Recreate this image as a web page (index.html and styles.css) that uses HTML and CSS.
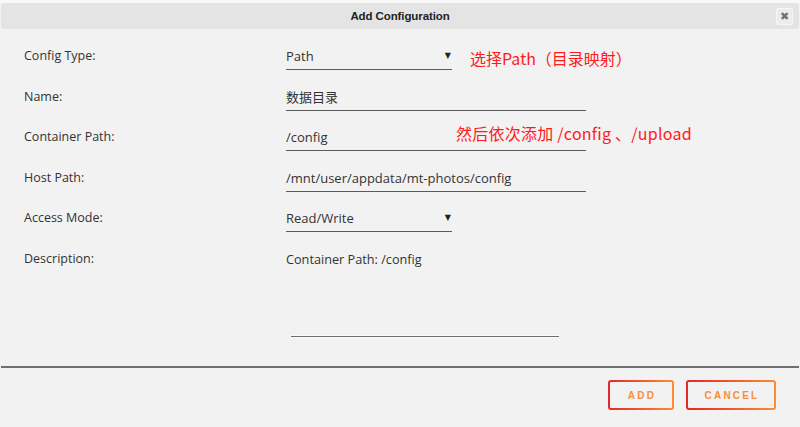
FILE: index.html
```html
<!DOCTYPE html>
<html>
<head>
<meta charset="utf-8">
<link rel="stylesheet" href="styles.css">
</head>
<body>
<div class="dialog">
  <div class="titlebar">
    <span class="title-spacer"></span>
    <span class="title">Add Configuration</span>
    <span class="close-wrap"><span class="close">&#x2716;</span></span>
  </div>
  <div class="form">
    <div class="label">Config Type:</div>
    <div class="field">
      <div class="select short"><span>Path</span><span class="arrow">&#9660;</span></div>
      <span class="note note-1">选择Path（目录映射）</span>
    </div>

    <div class="label">Name:</div>
    <div class="field"><div class="input long">数据目录</div></div>

    <div class="label">Container Path:</div>
    <div class="field">
      <div class="input long">/config</div>
      <span class="note note-2">然后依次添加 /config 、/upload</span>
    </div>

    <div class="label">Host Path:</div>
    <div class="field"><div class="input long">/mnt/user/appdata/mt-photos/config</div></div>

    <div class="label">Access Mode:</div>
    <div class="field">
      <div class="select short"><span>Read/Write</span><span class="arrow">&#9660;</span></div>
    </div>

    <div class="label">Description:</div>
    <div class="field"><div class="desc">Container Path: /config</div></div>
  </div>
  <div class="sep-short"></div>
  <div class="footer">
    <button class="btn btn-add">ADD</button>
    <button class="btn btn-cancel">CANCEL</button>
  </div>
</div>
</body>
</html>
```

FILE: styles.css
```css
html, body {
  margin: 0;
  padding: 0;
  background: #f2f2f2;
}
body {
  width: 800px;
  height: 427px;
  overflow: hidden;
  font-family: "Open Sans", "Noto Sans CJK SC", sans-serif;
  color: #333;
}
.dialog {
  display: flex;
  flex-direction: column;
  height: 427px;
  background: #f2f2f2;
  border-top: 3px solid #f8f8f8;
  box-sizing: border-box;
}
.titlebar {
  height: 26px;
  margin: 0 1px;
  background: #e4e4e4;
  border-radius: 4px;
  display: grid;
  grid-template-columns: 1fr auto 1fr;
  align-items: center;
}
.title {
  font-family: "Liberation Sans", Arial, sans-serif;
  font-weight: bold;
  font-size: 11.5px;
  color: #222;
  letter-spacing: -0.1px;
}
.close-wrap {
  display: flex;
  justify-content: flex-end;
  padding-right: 6px;
}
.close {
  width: 17px;
  height: 17px;
  box-sizing: border-box;
  background: #ececec;
  border: 1px solid #f7f7f7;
  border-radius: 2px;
  color: #727272;
  font-family: "DejaVu Sans", sans-serif;
  font-size: 11px;
  display: flex;
  align-items: center;
  justify-content: center;
}
.form {
  padding: 7px 0 0 24px;
  display: grid;
  grid-template-columns: 262px 1fr;
  grid-auto-rows: 40.6px;
}
.label {
  font-size: 12.5px;
  line-height: 16px;
  padding-top: 12px;
  color: #333;
}
.field {
  position: relative;
}
.input, .select {
  box-sizing: border-box;
  height: 34px;
  padding-top: 12px;
  font-size: 13px;
  line-height: 16px;
  border-bottom: 1px solid #5c5c5c;
  color: #333;
}
.long { width: 300px; }
.short { width: 166px; }
.select {
  display: flex;
  justify-content: space-between;
}
.arrow {
  font-family: "DejaVu Sans", sans-serif;
  font-size: 8px;
  color: #222;
  padding-right: 1px;
}
.desc {
  font-size: 12.7px;
  line-height: 16px;
  padding-top: 12px;
  color: #333;
}
.note {
  position: absolute;
  color: #ff1a1a;
  font-family: "Noto Sans CJK SC", "Noto Sans", sans-serif;
  font-size: 16px;
  line-height: 20px;
  white-space: nowrap;
}
.note-1 { left: 184px; top: 12px; }
.note-2 { left: 170px; top: 6px; letter-spacing: 0.25px; }
.sep-short {
  margin: 55px 0 0 291px;
  width: 268px;
  height: 1px;
  background: #6d6d6d;
  border-top: 1px solid #fafafa;
  border-bottom: 1px solid #fafafa;
}
.footer {
  margin-top: 28px;
  margin-left: 1px;
  margin-right: 1px;
  border-top: 2px solid #6f6f6f;
  padding: 12px 23px 0 0;
  display: flex;
  justify-content: flex-end;
  gap: 12px;
}
.btn {
  height: 30px;
  box-sizing: border-box;
  border: 2px solid transparent;
  border-radius: 3px;
  background:
    linear-gradient(#f2f2f2, #f2f2f2) padding-box,
    linear-gradient(90deg, #e22828, #ff8c2f) border-box;
  color: #f88d3e;
  font-family: "Liberation Sans", Arial, sans-serif;
  font-weight: bold;
  font-size: 10px;
  letter-spacing: 2.2px;
  padding: 1px 0 0 2px;
  cursor: pointer;
}
.btn-add { width: 66px; }
.btn-cancel { width: 90px; }
```
